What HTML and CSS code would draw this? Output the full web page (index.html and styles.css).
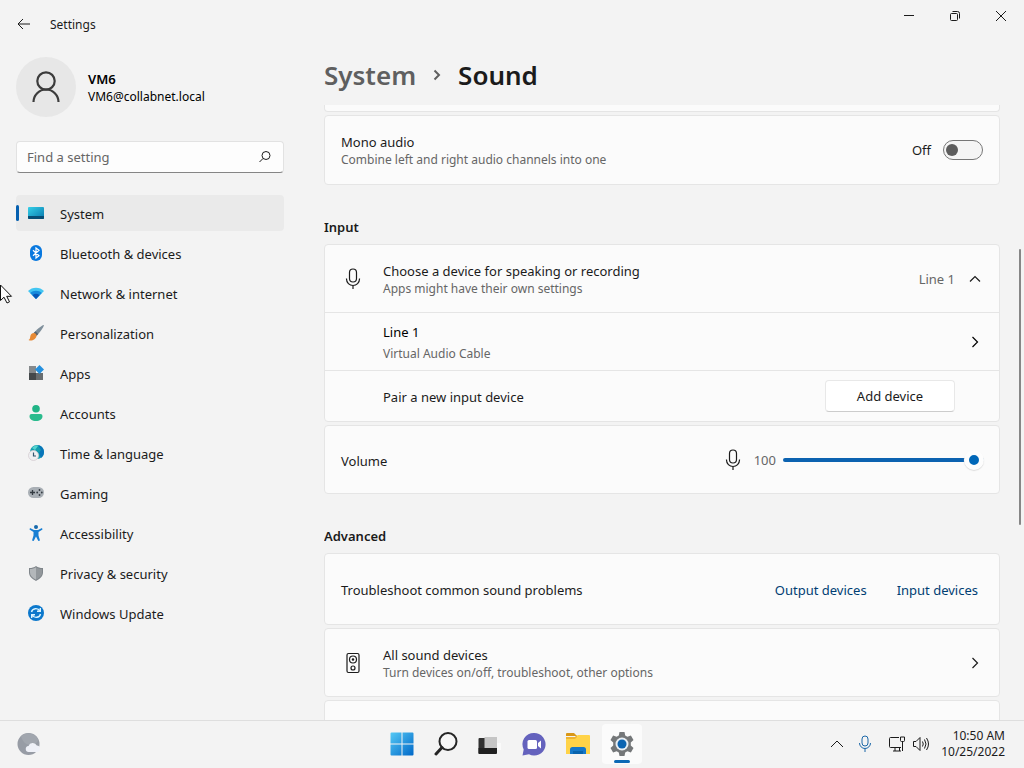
FILE: index.html
```html
<!doctype html>
<html lang="en">
<head>
    <meta charset="UTF-8">
    <meta name="viewport" content="width=device-width, initial-scale=1.0">
    <title>Settings</title>
    <link rel="stylesheet" href="styles.css">
</head>
<body>
    <header class="titlebar">
        <button class="back" aria-label="Back">
            <svg width="14" height="12" viewBox="0 0 14 12"><path d="M13 6H1M6 1L1 6l5 5"/></svg>
        </button>
        <span class="app-name">Settings</span>
        <div class="window-buttons">
            <button aria-label="Minimize"><svg width="12" height="12" viewBox="0 0 12 12"><path d="M1 5.5h10"/></svg></button>
            <button aria-label="Restore"><svg width="12" height="12" viewBox="0 0 12 12"><rect x="1.5" y="3.5" width="7" height="7" rx="1"/><path d="M3.5 1.5H8.500a2 2 0 0 1 2 2V8.500"/></svg></button>
            <button aria-label="Close"><svg width="12" height="12" viewBox="0 0 12 12"><path d="M1 1l10 10M11 1L1 11"/></svg></button>
        </div>
    </header>

    <div class="window">
        <aside class="sidebar">
            <div class="profile">
                <div class="avatar">
                    <svg width="30" height="34" viewBox="0 0 30 34"><circle cx="15" cy="11" r="8.700"/><path d="M2.500 32a12.500 12.500 0 0 1 25 0"/></svg>
                </div>
                <div class="user">
                    <p class="user-name">VM6</p>
                    <p class="user-mail">VM6@collabnet.local</p>
                </div>
            </div>

            <form class="search">
                <input type="text" aria-label="Find a setting" placeholder="Find a setting">
                <button type="button" aria-label="Search"><svg width="14" height="14" viewBox="0 0 14 14"><circle cx="8" cy="5.500" r="4"/><path d="M5 8.500L1.500 12"/></svg></button>
            </form>

            <nav>
                <a class="active" href="#system">
                    <svg width="16" height="16" viewBox="0 0 16 16">
                        <defs><linearGradient id="screen" x1="0" y1="0" x2="1" y2="1"><stop offset="0" stop-color="#35d0e8"/><stop offset="1" stop-color="#0877ad"/></linearGradient></defs>
                        <rect y="2" width="16" height="12" rx="1" fill="url(#screen)"/><path d="M0 11h16v2a1 1 0 0 1-1 1H1a1 1 0 0 1-1-1z" fill="#074d75"/>
                    </svg>
                    System
                </a>
                <a href="#bluetooth">
                    <svg width="16" height="16" viewBox="0 0 16 16"><rect x="2" width="12" height="16" rx="6" fill="#0878df"/><path d="M5 5.200l6 5.500L8 13V3l3 2.300-6 5.500" fill="none" stroke="#fff" stroke-width="1.200"/></svg>
                    Bluetooth &amp; devices
                </a>
                <a href="#network">
                    <svg width="16" height="16" viewBox="0 0 16 16"><path d="M0 6c4-4.500 12-4.500 16 0l-8 8z" fill="#43c6f2"/><path d="M2.200 8c3.300-3 8.300-3 11.600 0L8 14z" fill="#168bdc"/><path d="M4.500 10.200c2-1.800 5-1.800 7 0L8 14z" fill="#0756b5"/></svg>
                    Network &amp; internet
                </a>
                <a href="#personalization">
                    <svg width="16" height="16" viewBox="0 0 16 16"><path d="M15.800.200c.8 1-5.300 8.800-7.300 10.500L5.700 8C8 5.500 14.800-.700 15.800.200z" fill="#7f8f9b"/><path d="M7.500 6.300l2.700 2.700-1.700 1.800L5.700 8z" fill="#59636c"/><path d="M5.700 8c1.800.2 3 1.400 2.800 3C8 14.500 3.500 16.500.500 15c2-1 1.300-2.500 2-4.500.5-1.500 1.700-2.500 3.200-2.500z" fill="#e78a35"/></svg>
                    Personalization
                </a>
                <a href="#apps">
                    <svg width="16" height="16" viewBox="0 0 16 16"><path d="M1 1h7v7H1z" fill="#85898c"/><path d="M1 8h7v7H1z" fill="#44484b"/><path d="M8 8h7v7H8z" fill="#686d70"/><path d="M11.500 0L16 4.500 11.500 9 7 4.500z" fill="#2490df"/></svg>
                    Apps
                </a>
                <a href="#accounts">
                    <svg width="16" height="16" viewBox="0 0 16 16"><circle cx="8" cy="3.800" r="3.800" fill="#20b486"/><path d="M3.500 9h9a2 2 0 0 1 2 2c0 3.300-2.700 5-6.500 5s-6.500-1.700-6.500-5a2 2 0 0 1 2-2z" fill="#2abb8d"/></svg>
                    Accounts
                </a>
                <a href="#time">
                    <svg width="16" height="16" viewBox="0 0 16 16"><circle cx="9" cy="7" r="7" fill="#149dad"/><path d="M10 0c4 1 6 4 6 7 0 3-1.500 5-3 6l-2-5 2-3z" fill="#0875b9"/><path d="M4 3c2-2 4-3 6-2L7 5z" fill="#55d4cf"/><circle cx="5.500" cy="10.500" r="5" fill="#eef0f2" stroke="#d5cdd2" stroke-width=".8"/><path d="M5.500 7.500V11H8" fill="none" stroke="#31566e" stroke-width="1.200"/></svg>
                    Time &amp; language
                </a>
                <a href="#gaming">
                    <svg width="16" height="16" viewBox="0 0 16 16"><rect y="2" width="16" height="11" rx="5.500" fill="#a9afb5"/><path d="M2 7.500h5M4.500 5v5" stroke="#343b42" stroke-width="1.300"/><g fill="#343b42"><circle cx="11.500" cy="5" r=".9"/><circle cx="11.500" cy="10" r=".9"/><circle cx="9.200" cy="7.500" r=".9"/><circle cx="13.800" cy="7.500" r=".9"/></g></svg>
                    Gaming
                </a>
                <a href="#accessibility">
                    <svg width="16" height="16" viewBox="0 0 16 16"><circle cx="8" cy="2" r="2" fill="#1769ac"/><path d="M2 3l4 2h4l4-2 .5 1.500L10.500 7v3.500L12 15.500l-1.700.5L8 11.500 5.700 16 4 15.500l1.500-5V7l-4-2.500z" fill="#187fd4"/></svg>
                    Accessibility
                </a>
                <a href="#privacy">
                    <svg width="16" height="16" viewBox="0 0 16 16"><path d="M8 1c2 1.500 4 2 7 2v4.500c0 3.800-2.800 6-7 8.500-4.200-2.500-7-4.700-7-8.500V3c3 0 5-.5 7-2z" fill="#7f858a"/><path d="M8 2.200C6.300 3.400 4.500 4 2 4v3.500c0 3.200 2.300 5 6 7.300z" fill="#b3b7ba"/><path d="M8 2.200C9.700 3.400 11.500 4 14 4v3.500c0 3.200-2.300 5-6 7.300z" fill="#92979b"/></svg>
                    Privacy &amp; security
                </a>
                <a href="#update">
                    <svg width="16" height="16" viewBox="0 0 16 16"><circle cx="8" cy="8" r="8" fill="#0c78cc"/><path d="M3.500 7c.8-4 6.500-4.500 8.500-1M12.300 3v3.200H9M12.500 9c-.8 4-6.500 4.500-8.500 1M3.700 13V9.800H7" fill="none" stroke="#d9f3ff" stroke-width="1.400"/></svg>
                    Windows Update
                </a>
            </nav>
        </aside>

        <main>
            <h1>
                <a href="#system">System</a>
                <svg width="8" height="12" viewBox="0 0 8 12"><path d="M1.500 1.500L6 6l-4.500 4.500"/></svg>
                <span>Sound</span>
            </h1>

            <div class="scroll-area">
                <div class="card card-end"></div>

                <label class="card row row-mono" for="mono">
                    <span class="text">Mono audio<small>Combine left and right audio channels into one</small></span>
                    <span>Off</span>
                    <input id="mono" class="toggle" type="checkbox" role="switch">
                </label>

                <h2>Input</h2>
                <section class="card">
                    <div class="row row-head">
                        <svg class="row-icon" width="24" height="24" viewBox="0 0 24 24"><rect x="8.500" y="2" width="7" height="13" rx="3.500"/><path d="M5.500 11.500v.5a6.500 6.500 0 0 0 13 0v-.5M12 18.500V22"/></svg>
                        <span class="text">Choose a device for speaking or recording<small>Apps might have their own settings</small></span>
                        <span class="muted">Line 1</span>
                        <button class="arrow" aria-label="Collapse"><svg width="12" height="12" viewBox="0 0 12 12"><path d="M1 8.500l5-5 5 5"/></svg></button>
                    </div>
                    <div class="row row-device">
                        <span class="text">Line 1<small>Virtual Audio Cable</small></span>
                        <button class="arrow" aria-label="Line 1 properties"><svg width="12" height="12" viewBox="0 0 12 12"><path d="M3.500 1l5 5-5 5"/></svg></button>
                    </div>
                    <div class="row row-pair">
                        <span class="text">Pair a new input device</span>
                        <button class="add">Add device</button>
                    </div>
                </section>

                <div class="card row row-volume">
                    <label class="text" for="volume">Volume</label>
                    <svg width="24" height="24" viewBox="0 0 24 24"><rect x="8.500" y="2" width="7" height="13" rx="3.500"/><path d="M5.500 11.500v.5a6.500 6.500 0 0 0 13 0v-.5M12 18.500V22"/></svg>
                    <output class="muted" for="volume">100</output>
                    <input id="volume" type="range" min="0" max="100" value="100">
                </div>

                <h2>Advanced</h2>
                <div class="card row row-links">
                    <span class="text">Troubleshoot common sound problems</span>
                    <a href="#output">Output devices</a>
                    <a href="#input">Input devices</a>
                </div>

                <div class="card row">
                    <svg class="row-icon" width="24" height="24" viewBox="0 0 24 24"><rect x="6" y="2.500" width="12" height="19" rx="1.500"/><circle cx="12" cy="8.500" r="3.500"/><circle cx="12" cy="8.500" r=".7"/><circle cx="12" cy="17" r="2"/></svg>
                    <span class="text">All sound devices<small>Turn devices on/off, troubleshoot, other options</small></span>
                    <button class="arrow" aria-label="All sound devices"><svg width="12" height="12" viewBox="0 0 12 12"><path d="M3.500 1l5 5-5 5"/></svg></button>
                </div>

                <div class="card row"></div>
            </div>
            <div class="scroll-thumb"></div>
        </main>
    </div>

    <footer class="taskbar">
        <button class="weather" aria-label="Weather">
            <svg width="24" height="24" viewBox="0 0 24 24"><circle cx="11.500" cy="12" r="11" fill="#979ca5"/><path d="M4 4a11 11 0 0 1 17 3c0 4-4 6-8 6S5 9 4 4z" fill="#a1a6ae"/><path d="M12 20a3 3 0 0 1-.5-6 4.500 4.500 0 0 1 8.300-.5 3.300 3.300 0 0 1 .7 6.500z" fill="#eef0f7"/></svg>
        </button>
        <div class="pinned">
            <button aria-label="Start">
                <svg width="24" height="24" viewBox="0 0 24 24">
                    <defs><linearGradient id="start" x1="0" y1="0" x2="1" y2="1"><stop offset="0" stop-color="#55c9f5"/><stop offset="1" stop-color="#0068c8"/></linearGradient></defs>
                    <path d="M1.500.500H11.500v11H.500v-10a1 1 0 0 1 1-1zM12.500.500h10a1 1 0 0 1 1 1v10h-11zM.500 12.500h11v11h-10a1 1 0 0 1-1-1zM12.500 12.500h11v10a1 1 0 0 1-1 1h-10z" fill="url(#start)"/>
                </svg>
            </button>
            <button aria-label="Search"><svg width="24" height="24" viewBox="0 0 24 24"><circle cx="14" cy="9.500" r="8.500" fill="#f6f6f6" stroke="#252525" stroke-width="2"/><path d="M8 15.500l-6 6.500" stroke="#252525" stroke-width="3" stroke-linecap="round"/></svg></button>
            <button aria-label="Task view"><svg width="24" height="24" viewBox="0 0 24 24"><path d="M1.500 6h16.500v16H1.500a1 1 0 0 1-1-1V7a1 1 0 0 1 1-1z" fill="#303030"/><path d="M6.500 5H19v11H6.500z" fill="#c5c5c5"/><path d="M19 11h4v7h-4z" fill="#fafafa"/><path d="M6.500 16H19v5a1 1 0 0 1-1 1H1.500a1 1 0 0 1-1-1v-5z" fill="#202020"/></svg></button>
            <button aria-label="Chat"><svg width="24" height="24" viewBox="0 0 24 24"><path d="M12 1a11.300 11.300 0 1 1-5 21.300L.500 23.500l1.200-6A11.300 11.300 0 0 1 12 1z" fill="#6462bd"/><rect x="5.500" y="8" width="9.500" height="9" rx="1.500" fill="#fff"/><path d="M16 11l3-2.500v8L16 14z" fill="#fff"/></svg></button>
            <button aria-label="File Explorer"><svg width="26" height="24" viewBox="0 0 26 24"><path d="M2 1h7l3 3H1V2a1 1 0 0 1 1-1z" fill="#d99717"/><path d="M1 5h9l3-2h11a1 1 0 0 1 1 1v18H1z" fill="#ffd348"/><path d="M1 5h9l2-2v2L10 7H1z" fill="#eeb432"/><path d="M5 22v-4.500a2.500 2.500 0 0 1 2.500-2.500h11a2.500 2.500 0 0 1 2.500 2.500V22z" fill="#1477c9"/><path d="M8 19h10v3H8z" fill="#0863ad"/></svg></button>
            <button class="open" aria-label="Settings"><svg width="24" height="24" viewBox="0 0 24 24"><path d="M9.500 0h5l.7 3.500 2.200 1.200 3.500-1.200L23.500 8l-2.700 2.500v3L23.500 16l-2.600 4.500-3.500-1.200-2.200 1.200-.7 3.500h-5l-.7-3.500-2.200-1.200-3.500 1.200L.500 16l2.700-2.500v-3L.500 8l2.600-4.500 3.500 1.200 2.200-1.200z" fill="#747779"/><circle cx="12" cy="12" r="6.500" fill="#e9eff4"/><circle cx="12" cy="12" r="4.500" fill="#0b64b1"/></svg></button>
        </div>
        <div class="tray">
            <button aria-label="Show hidden icons"><svg width="14" height="14" viewBox="0 0 14 14"><path d="M1 10l6-6 6 6"/></svg></button>
            <button class="mic" aria-label="Microphone in use"><svg width="16" height="18" viewBox="0 0 16 18"><rect x="5" y="1" width="6" height="10" rx="3"/><path d="M2.500 8a5.500 5.500 0 0 0 11 0M8 13.500V17"/></svg></button>
            <button aria-label="Network"><svg width="18" height="18" viewBox="0 0 18 18"><path d="M11 2.500H2.500a1 1 0 0 0-1 1v8a1 1 0 0 0 1 1H13M5 16h8M7 12.500V16M11.500 12.500V16M14.500 7v9M12.500 2h4v3.500a1 1 0 0 1-1 1h-2a1 1 0 0 1-1-1z"/></svg></button>
            <button aria-label="Volume"><svg width="18" height="18" viewBox="0 0 18 18"><path d="M1.500 6.500H4l4-4v13l-4-4H1.500zM10.500 6.500q1.500 2.500 0 5M12.500 4.500q3 4.500 0 9M14.500 3q4 6 0 12"/></svg></button>
            <time datetime="2022-10-25T10:50">10:50 AM<br>10/25/2022</time>
        </div>
    </footer>

    <svg class="cursor" width="14" height="20" viewBox="0 0 14 20"><path d="M.500 1v15.500l3.500-3.300 3 5.800 2.500-1.200-2.800-5.500h4.800z"/></svg>
</body>
</html>
```
FILE: styles.css
```css
* {
    box-sizing: border-box;
}

body {
    margin: 0;
    height: 100vh;
    display: flex;
    flex-direction: column;
    overflow: hidden;
    background-color: #f3f3f3;
    color: #1b1b1b;
    font-family: "Noto Sans", "Open Sans", sans-serif;
    font-size: 13px;
    line-height: 18px;
}

p, h1, h2 {
    margin: 0;
}

a {
    color: inherit;
    text-decoration: none;
}

button {
    display: flex;
    align-items: center;
    justify-content: center;
    padding: 0;
    border: 0;
    background: none;
    color: inherit;
    font: inherit;
}

svg {
    flex: none;
}

.titlebar svg,
.avatar svg,
.search svg,
main svg,
.tray svg {
    fill: none;
    stroke: currentColor;
}

.titlebar {
    flex: none;
    display: flex;
    align-items: center;
    height: 48px;
    padding-left: 12px;
}

.back {
    width: 24px;
    height: 24px;
}

.app-name {
    margin-left: 14px;
    padding-top: 2px;
    font-size: 12px;
}

.window-buttons {
    display: flex;
    align-self: flex-start;
    margin-left: auto;
}

.window-buttons button {
    width: 46px;
    height: 32px;
}

.window {
    display: flex;
    flex: 1;
    min-height: 0;
}

/* Sidebar */

.sidebar {
    flex: none;
    width: 300px;
    padding: 9px 16px;
}

.profile {
    display: flex;
    align-items: center;
    gap: 12px;
    color: #000;
}

.avatar {
    display: flex;
    align-items: center;
    justify-content: center;
    width: 60px;
    height: 60px;
    border-radius: 50%;
    background-color: #e7e7e7;
    color: #3c3c3c;
}

.avatar svg {
    stroke-width: 2.2;
}

.user {
    padding-top: 2px;
}

.user-name {
    font-weight: 600;
}

.user-mail {
    font-size: 12px;
}

.search {
    display: flex;
    align-items: center;
    height: 32px;
    margin: 24px 0 22px;
    padding: 0 11px 0 10px;
    border: 1px solid #e2e2e2;
    border-bottom-color: #858585;
    border-radius: 4px;
    background-color: #fdfdfd;
}

.search input {
    flex: 1;
    min-width: 0;
    padding: 0;
    border: 0;
    outline: 0;
    background: none;
    font: inherit;
}

.search input::placeholder {
    color: #666;
}

nav {
    display: flex;
    flex-direction: column;
    gap: 4px;
}

nav a {
    display: flex;
    align-items: center;
    gap: 16px;
    height: 36px;
    padding: 2px 12px 0;
    border-radius: 4px;
}

nav svg {
    margin-bottom: 2px;
}

nav .active {
    position: relative;
    background-color: #eaeaea;
}

nav .active::before {
    content: "";
    position: absolute;
    top: 10px;
    left: 0;
    width: 3px;
    height: 16px;
    border-radius: 2px;
    background-color: #0560b0;
}

/* Sound page */

main {
    position: relative;
    display: flex;
    flex: 1;
    flex-direction: column;
    min-width: 0;
    padding: 9px 24px 0;
}

h1 {
    display: flex;
    align-items: center;
    gap: 17px;
    font-size: 26px;
    font-weight: 600;
    line-height: 36px;
}

h1 a, h1 svg {
    color: #5f5f5f;
}

h1 svg {
    stroke-width: 2;
}

h2 {
    padding: 33px 0 8px;
    font-size: 13px;
    font-weight: 600;
    line-height: 18px;
}

.scroll-area {
    flex: 1;
    min-height: 0;
    margin-top: 12px;
    overflow: hidden;
}

.card {
    border: 1px solid #e5e5e5;
    border-radius: 4px;
    background-color: #fbfbfb;
}

.card + .card {
    margin-top: 3px;
}

.card-end {
    height: 7px;
    border-top: 0;
    border-radius: 0 0 4px 4px;
}

.row {
    display: flex;
    align-items: center;
    min-height: 69px;
    padding: 0 16px;
}

.row .row {
    border-radius: 0;
}

.row-mono {
    min-height: 70px;
}

.text {
    flex: 1;
    padding-top: 2px;
}

small {
    display: block;
    color: #666;
    font-size: 12px;
}

.muted {
    color: #666;
}

.row-icon {
    margin-right: 18px;
}

.row svg {
    stroke-width: 1.2;
}

.toggle {
    appearance: none;
    width: 40px;
    height: 20px;
    margin: 0 0 0 12px;
    padding: 3px 2px;
    border: 1px solid #777;
    border-radius: 10px;
    background-color: #f5f5f5;
}

.toggle::before {
    content: "";
    display: block;
    width: 12px;
    height: 12px;
    border-radius: 50%;
    background-color: #5d5d5d;
}

.toggle:checked::before {
    margin-left: auto;
}

.arrow {
    width: 16px;
    height: 24px;
}

.muted + .arrow {
    margin-left: 12px;
}

.row-head {
    min-height: 67px;
}

.row-device {
    min-height: 58px;
    padding-left: 58px;
    border-top: 1px solid #e5e5e5;
    color: #000;
}

.row-device small {
    margin-top: 4px;
}

.row-pair {
    min-height: 51px;
    padding: 0 44px 0 58px;
    border-top: 1px solid #e5e5e5;
}

.add {
    width: 130px;
    height: 32px;
    border: 1px solid #e8e8e8;
    border-bottom-color: #ccc;
    border-radius: 4px;
    background-color: #fff;
}

.row-volume output {
    margin: 0 7px 0 9px;
}

input[type="range"] {
    appearance: none;
    width: 201px;
    height: 20px;
    margin: 0;
    margin-right: -1px;
    background: none;
}

input[type="range"]::-webkit-slider-runnable-track {
    height: 4px;
    border-radius: 2px;
    background-color: #0c62b0;
}

input[type="range"]::-webkit-slider-thumb {
    appearance: none;
    width: 20px;
    height: 20px;
    margin-top: -8px;
    border: 5px solid #fdfdfd;
    border-radius: 50%;
    background-color: #0067b8;
    box-shadow: 0 1px 1px #ddd;
}

.row-links {
    min-height: 72px;
    gap: 30px;
    padding-right: 21px;
}

.row-links a {
    padding-top: 2px;
    color: #003e73;
}

.scroll-thumb {
    position: absolute;
    top: 201px;
    right: 3px;
    width: 2px;
    height: 276px;
    border-radius: 1px;
    background-color: #868686;
}

/* Taskbar */

.taskbar {
    flex: none;
    display: grid;
    grid-template-columns: 1fr auto 1fr;
    align-items: center;
    height: 48px;
    padding-bottom: 2px;
    border-top: 1px solid #dedede;
    background-color: #f3f3f3;
}

.weather {
    justify-self: start;
    margin-left: 17px;
}

.pinned {
    display: flex;
    gap: 4px;
}

.pinned button {
    width: 40px;
    height: 40px;
    border-radius: 4px;
}

.pinned .open {
    position: relative;
    background-color: #fbfbfb;
}

.open::after {
    content: "";
    position: absolute;
    bottom: 1px;
    left: 12px;
    width: 16px;
    height: 3px;
    border-radius: 2px;
    background-color: #0b69b5;
}

.tray {
    display: flex;
    align-items: center;
    justify-content: flex-end;
    gap: 6px;
    padding-right: 19px;
}

.tray .mic {
    margin: 0 9px 0 7px;
    color: #1b67a8;
}

.tray time {
    margin-left: 5px;
    font-size: 12px;
    line-height: 16px;
    text-align: right;
}

/* Mouse pointer over the page */

.cursor {
    position: absolute;
    top: 284px;
    left: 0;
    fill: #fff;
    stroke: #111;
}
```
